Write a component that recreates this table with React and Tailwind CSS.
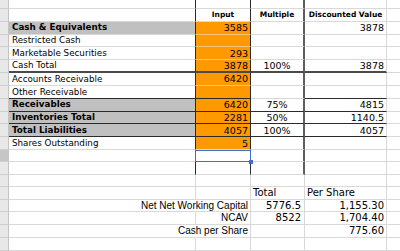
import React from "react";

const label = "font-['DejaVu_Sans',sans-serif] text-[8.75px] text-black";
const bold = "font-['DejaVu_Sans',sans-serif] text-[8.75px] font-bold text-black";
const num = "font-['DejaVu_Sans',sans-serif] text-[9.5px] text-black";
const head = "font-['DejaVu_Sans',sans-serif] text-[7.5px] font-bold text-black";
const helv = "font-['Liberation_Sans',sans-serif] text-[10px] text-black";
const num10 = "font-['DejaVu_Sans',sans-serif] text-[10px] text-black";

const ORANGE = "bg-[#ff9900]";
const GRAY = "bg-[#c0c0c0]";
const LIGHT = "border-b-[#d9d9d9]";
const OLINE = "border-b-[#f8c37a]";
const DARK = "border-b-[#2b2b2b]";

// one spreadsheet row: row header + columns A..E
const Row = ({ h, sel, low, a = {}, b = {}, c = {}, d = {} }) => {
    const vA = low ? "border-r-[#d9d9d9]" : "border-r-[#2b2b2b]";
    const vB = low ? "border-r-[#d9d9d9]" : "border-r-[#2b2b2b]";
    const vC = low ? "border-r border-r-[#d9d9d9]" : "border-r-2 border-r-[#5e5e5e]";

    return (
        <div className={`flex ${h}`}>
            <div
                className={`w-[9px] shrink-0 border-r border-b border-r-[#c4c4c4] border-b-[#cfcfcf] ${
                    sel ? "bg-[#c6c6c6]" : "bg-[#e8e8e8]"
                }`}
            />
            <div
                className={`flex w-[187px] shrink-0 items-center whitespace-nowrap border-r pl-[3px] leading-none ${vA} ${
                    a.bb || "border-b"
                } ${a.bg || "bg-white"} ${a.line || LIGHT} ${a.f || label} ${a.hide ? "border-r-white" : ""}`}
            >
                {a.t}
            </div>
            <div
                className={`relative flex w-[55px] shrink-0 items-center whitespace-nowrap border-r leading-none ${vB} ${
                    b.bb || "border-b"
                } ${b.j || "justify-end pr-[2px]"} ${b.bg || "bg-white"} ${b.line || LIGHT} ${b.f || num}`}
            >
                {b.t}
                {sel && (
                    <>
                        <div className="absolute -left-[1px] top-0 -right-[1px] -bottom-[1px] z-10 border border-[#3c6edb]" />
                        <div className="absolute -right-[3px] -bottom-[3px] z-10 h-[4px] w-[4px] bg-[#3c6edb]" />
                    </>
                )}
            </div>
            <div
                className={`flex w-[54px] shrink-0 items-center whitespace-nowrap leading-none ${vC} ${
                    c.bb || "border-b"
                } ${c.j || "justify-center"} ${c.line || LIGHT} ${c.f || num} bg-white`}
            >
                {c.t}
            </div>
            <div
                className={`flex w-[82px] shrink-0 items-center whitespace-nowrap border-r border-r-[#d9d9d9] leading-none ${
                    d.bb || "border-b"
                } ${d.j || "justify-end pr-[2px]"} ${d.line || LIGHT} ${d.f || num} bg-white`}
            >
                {d.t}
            </div>
            <div className={`flex-1 border-b ${LIGHT} bg-white`} />
        </div>
    );
};

const App = () => {
    return (
        <div className="flex h-[251px] w-[400px] flex-col overflow-hidden bg-white">
            <Row h="h-[9px]" />
            <Row
                h="h-[13px]"
                b={{ t: "Input", f: head, j: "justify-center" }}
                c={{ t: "Multiple", f: head }}
                d={{ t: "Discounted Value", f: head, j: "justify-center" }}
            />
            <Row
                h="h-[13px]"
                a={{ t: "Cash & Equivalents", f: bold, bg: GRAY }}
                b={{ t: "3585", bg: ORANGE, line: OLINE }}
                d={{ t: "3878" }}
            />
            <Row h="h-[13px]" a={{ t: "Restricted Cash" }} b={{ bg: ORANGE, line: OLINE }} />
            <Row h="h-[13px]" a={{ t: "Marketable Securities" }} b={{ t: "293", bg: ORANGE, line: OLINE }} />
            <Row
                h="h-[13px]"
                a={{ t: "Cash Total", bb: "border-b-2", line: "border-b-[#4a4a4a]" }}
                b={{ t: "3878", bg: ORANGE, bb: "border-b-2", line: "border-b-[#4a4a4a]" }}
                c={{ t: "100%", bb: "border-b-2", line: "border-b-[#4a4a4a]" }}
                d={{ t: "3878", bb: "border-b-2", line: "border-b-[#4a4a4a]" }}
            />
            <Row h="h-[13px]" a={{ t: "Accounts Receivable" }} b={{ t: "6420", bg: ORANGE, line: OLINE }} />
            <Row
                h="h-[13px]"
                a={{ t: "Other Receivable", line: DARK }}
                b={{ bg: ORANGE, line: DARK }}
                d={{ line: DARK }}
            />
            <Row
                h="h-[13px]"
                a={{ t: "Receivables", f: bold, bg: GRAY, line: DARK }}
                b={{ t: "6420", bg: ORANGE, line: DARK }}
                c={{ t: "75%", line: DARK }}
                d={{ t: "4815", line: DARK }}
            />
            <Row
                h="h-[13px]"
                a={{ t: "Inventories Total", f: bold, bg: GRAY, line: DARK }}
                b={{ t: "2281", bg: ORANGE, line: DARK }}
                c={{ t: "50%", line: DARK }}
                d={{ t: "1140.5", line: DARK }}
            />
            <Row
                h="h-[13px]"
                a={{ t: "Total Liabilities", f: bold, bg: GRAY, line: DARK }}
                b={{ t: "4057", bg: ORANGE, line: DARK }}
                c={{ t: "100%", line: DARK }}
                d={{ t: "4057", line: DARK }}
            />
            <Row h="h-[13px]" a={{ t: "Shares Outstanding" }} b={{ t: "5", bg: ORANGE }} />
            <Row h="h-[12px]" sel />
            <Row h="h-[13px]" />
            <Row h="h-[12px]" low />
            <Row
                h="h-[13px]"
                low
                c={{ t: "Total", f: num10, j: "justify-start pl-[2px]" }}
                d={{ t: "Per Share", f: num10, j: "justify-start pl-[2px]" }}
            />
            <Row
                h="h-[13px]"
                low
                a={{ hide: true }}
                b={{ t: "Net Net Working Capital", f: helv }}
                c={{ t: "5776.5", f: num10, j: "justify-end pr-[3px]" }}
                d={{ t: "1,155.30", f: num10 }}
            />
            <Row
                h="h-[13px]"
                low
                b={{ t: "NCAV", f: helv }}
                c={{ t: "8522", f: num10, j: "justify-end pr-[3px]" }}
                d={{ t: "1,704.40", f: num10 }}
            />
            <Row
                h="h-[13px]"
                low
                a={{ hide: true }}
                b={{ t: "Cash per Share", f: helv }}
                d={{ t: "775.60", f: num10 }}
            />
            <Row h="h-[13px]" low />
        </div>
    );
};

export default App;
